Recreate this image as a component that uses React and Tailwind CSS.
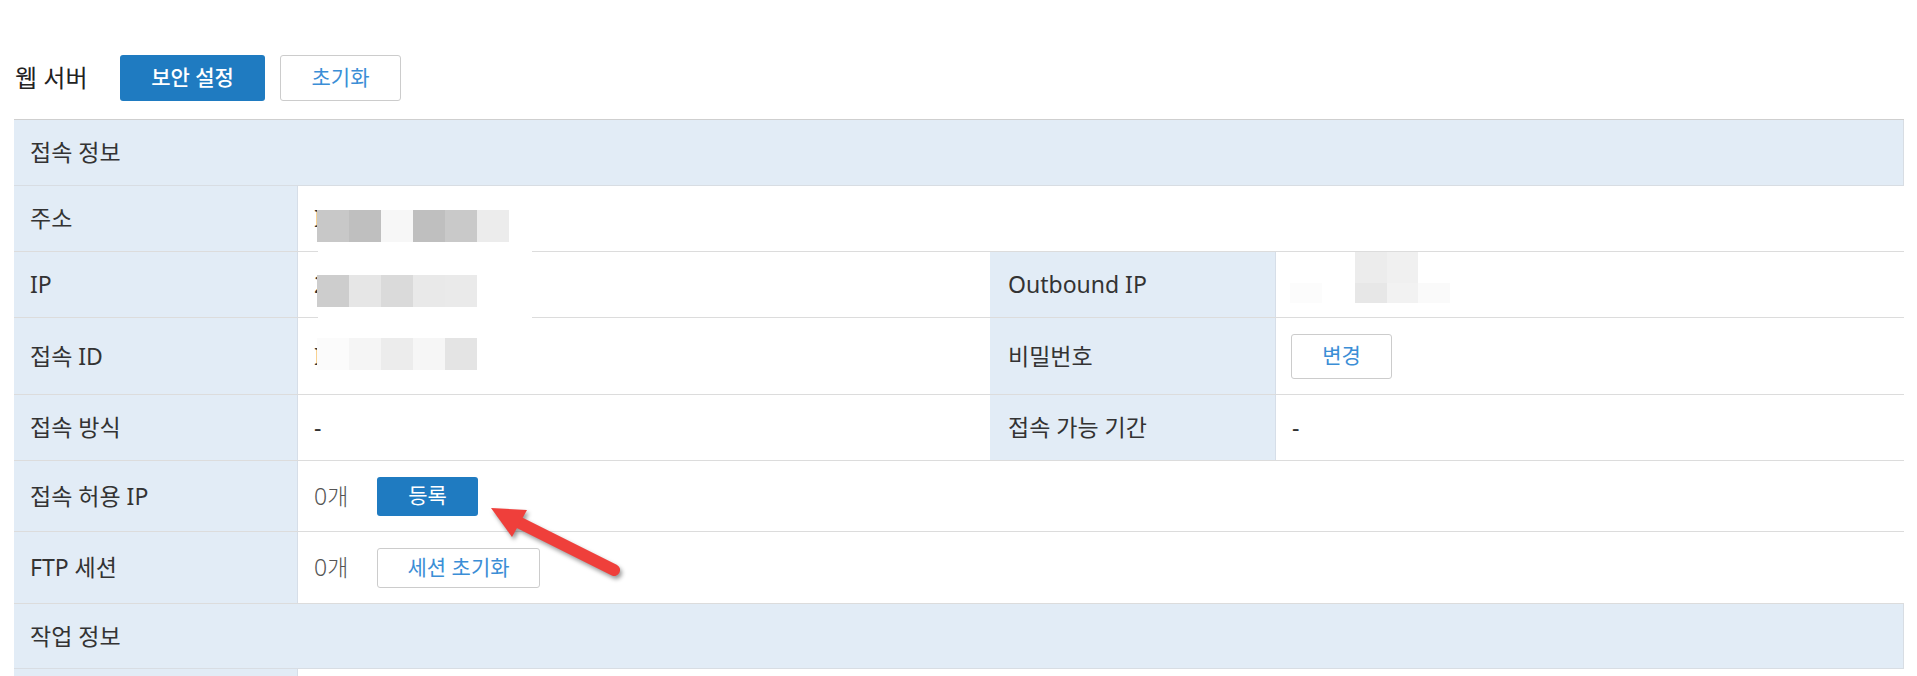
import React from "react";

function Label({ children, w = "w-[284px]", pl = "pl-4" }) {
  return (
    <div className={`${w} ${pl} shrink-0 h-full flex items-center bg-[#e2ecf6] border-r border-[#d6dee8] text-[23px] text-[#333]`}>
      {children}
    </div>
  );
}

function Row({ h, children }) {
  return <div className={`flex ${h} border-b border-[#dcdcdc]`}>{children}</div>;
}

function Section({ h, children }) {
  return (
    <div className={`flex items-center ${h} bg-[#e2ecf6] border-b border-r border-[#d8dde3] pl-4 text-[23px] text-[#333]`}>
      {children}
    </div>
  );
}

function Value({ w = "", children }) {
  return <div className={`${w} h-full flex items-center pl-4 text-[23px] text-[#333]`}>{children}</div>;
}

function Tiles({ left, top, h = "h-[32px]", colors }) {
  return (
    <div className="absolute flex" style={{ left, top }}>
      {colors.map((c, i) => (
        <div key={i} className={`w-[32px] ${h}`} style={{ background: c }} />
      ))}
    </div>
  );
}

function Arrow() {
  return (
    <svg
      className="absolute left-[480px] top-[495px] drop-shadow-[2px_3px_2px_rgba(0,0,0,0.4)]"
      width="150"
      height="95"
      viewBox="0 0 150 95"
    >
      <line x1="34" y1="25" x2="134" y2="75" stroke="#ef3f3b" strokeWidth="12" strokeLinecap="round" />
      <polygon points="11,13 47,15 32,42" fill="#ef3f3b" />
    </svg>
  );
}

export default function App() {
  return (
    <div className="relative w-full h-[676px] overflow-hidden bg-white font-['Noto_Sans','Noto_Sans_CJK_KR',sans-serif] text-[#333]">
      <div className="pl-[14px] pr-[13px] pt-[55px]">
        <div className="flex items-center h-[46px]">
          <h2 className="w-[106px] pl-px text-[24px] font-normal text-[#222]">웹 서버</h2>
          <button className="h-[46px] w-[145px] rounded-[3px] bg-[#1f7bc1] text-white text-[21px] font-medium">
            보안 설정
          </button>
          <button className="ml-[15px] h-[46px] w-[121px] rounded-[3px] border border-[#cccccc] bg-white text-[#3b8ed6] text-[21px]">
            초기화
          </button>
        </div>

        <div className="relative mt-[18px] border-t border-[#cfcfcf]">
          <Section h="h-[66px]">접속 정보</Section>

          <Row h="h-[66px]">
            <Label>주소</Label>
            <Value>I</Value>
          </Row>

          <Row h="h-[66px]">
            <Label>IP</Label>
            <Value w="w-[692px]">2</Value>
            <Label w="w-[286px]" pl="pl-[18px]">Outbound IP</Label>
            <Value />
          </Row>

          <Row h="h-[77px]">
            <Label>접속 ID</Label>
            <Value w="w-[692px]">I</Value>
            <Label w="w-[286px]" pl="pl-[18px]">비밀번호</Label>
            <div className="h-full flex items-center pl-[15px]">
              <button className="h-[45px] w-[101px] rounded-[3px] border border-[#cccccc] bg-white text-[#3b8ed6] text-[21px]">
                변경
              </button>
            </div>
          </Row>

          <Row h="h-[66px]">
            <Label>접속 방식</Label>
            <Value w="w-[692px]">-</Value>
            <Label w="w-[286px]" pl="pl-[18px]">접속 가능 기간</Label>
            <Value>-</Value>
          </Row>

          <Row h="h-[71px]">
            <Label>접속 허용 IP</Label>
            <div className="h-full flex items-center pl-4">
              <span className="w-[63px] text-[23px] text-[#555] font-light">0개</span>
              <button className="h-[39px] w-[101px] rounded-[3px] bg-[#1f7bc1] text-white text-[21px]">등록</button>
            </div>
          </Row>

          <Row h="h-[72px]">
            <Label>FTP 세션</Label>
            <div className="h-full flex items-center pl-4">
              <span className="w-[63px] text-[23px] text-[#555] font-light">0개</span>
              <button className="h-[40px] w-[163px] rounded-[3px] border border-[#cccccc] bg-white text-[#3b8ed6] text-[21px]">
                세션 초기화
              </button>
            </div>
          </Row>

          <Section h="h-[65px]">작업 정보</Section>

          <Row h="h-[66px]">
            <Label>{""}</Label>
            <Value />
          </Row>

          {/* redaction overlay */}
          <div className="absolute left-[304px] top-[80px] w-[214px] h-[125px] bg-white" />
          <Tiles left={303} top={90} colors={["#c8c8c8", "#bfbfbf", "#f7f7f7", "#bfbfbf", "#c9c9c9", "#ececec"]} />
          <Tiles left={303} top={155} colors={["#cdcdcd", "#e6e6e6", "#dadada", "#e9e9e9", "#eaeaea"]} />
          <Tiles left={303} top={218} colors={["#fbfbfb", "#f5f5f5", "#ececec", "#f6f6f6", "#e4e4e4"]} />
          <div className="absolute left-[1276px] top-[163px] w-[32px] h-[20px] bg-[#fcfcfc]" />
          <div className="absolute left-[1341px] top-[132px] flex">
            <div className="flex flex-col w-[32px]">
              <div className="h-[31px] bg-[#ececec]" />
              <div className="h-[20px] bg-[#e7e7e7]" />
            </div>
            <div className="flex flex-col w-[31px]">
              <div className="h-[31px] bg-[#f0f0f0]" />
              <div className="h-[20px] bg-[#f2f2f2]" />
            </div>
            <div className="flex flex-col w-[32px]">
              <div className="h-[31px] bg-white" />
              <div className="h-[20px] bg-[#fafafa]" />
            </div>
          </div>
        </div>
      </div>
      <Arrow />
    </div>
  );
}
